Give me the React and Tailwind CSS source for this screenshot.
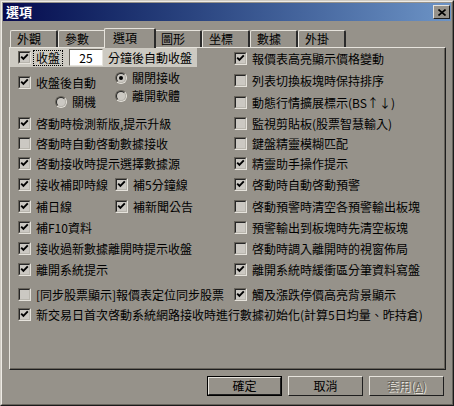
import React from 'react';

const FONT = { fontFamily: '"Noto Sans CJK TC", "Noto Sans CJK SC", sans-serif' };

const Check = ({ checked }) => (
  <span className="block w-[13px] h-[13px] shrink-0 border border-t-[#67635b] border-l-[#67635b] border-b-[#e6e3dc] border-r-[#e6e3dc]">
    <span className="flex items-center justify-center w-full h-full border border-t-[#262626] border-l-[#262626] border-b-[#b8b5ad] border-r-[#b8b5ad] bg-[#cbc8c2]">
      {checked && (
        <svg width="9" height="9" viewBox="0 0 9 9">
          <path d="M1.2 3.6 L3.4 5.9 L7.8 1.4" fill="none" stroke="#000" strokeWidth="1.9" />
        </svg>
      )}
    </span>
  </span>
);

const Radio = ({ checked }) => (
  <span className="block w-[12px] h-[12px] shrink-0 rounded-full border border-t-[#67635b] border-l-[#67635b] border-b-[#e6e3dc] border-r-[#e6e3dc]">
    <span className="flex items-center justify-center w-full h-full rounded-full border border-t-[#262626] border-l-[#262626] border-b-[#b8b5ad] border-r-[#b8b5ad] bg-[#cbc8c2]">
      {checked && <span className="block w-[4px] h-[4px] rounded-full bg-black" />}
    </span>
  </span>
);

const Item = ({ checked, label }) => (
  <span className="flex items-center h-[13px] gap-[5px] whitespace-nowrap">
    <Check checked={checked} />
    <span className="leading-[13px]">{label}</span>
  </span>
);

const Row = ({ h, children, className = '' }) => (
  <div className={`flex items-start pt-[4px] ${h} ${className}`}>{children}</div>
);

const rightRows = [
  { c: true, t: '報價表高亮顯示價格變動', h: 'h-[22px]' },
  { c: false, t: '列表切換板塊時保持排序', h: 'h-[22px]' },
  { c: false, t: '動態行情擴展標示(BS↑↓)', h: 'h-[21px]' },
  { c: false, t: '監視剪貼板(股票智慧輸入)', h: 'h-[20px]' },
  { c: false, t: '鍵盤精靈模糊匹配', h: 'h-[20px]' },
  { c: true, t: '精靈助手操作提示', h: 'h-[21px]' },
  { c: true, t: '啓動時自動啓動預警', h: 'h-[22px]' },
  { c: false, t: '啓動預警時清空各預警輸出板塊', h: 'h-[21px]' },
  { c: false, t: '預警輸出到板塊時先清空板塊', h: 'h-[21px]' },
  { c: false, t: '啓動時調入離開時的視窗佈局', h: 'h-[21px]' },
  { c: true, t: '離開系統時緩衝區分筆資料寫盤', h: 'h-[25px]' },
  { c: true, t: '觸及漲跌停價高亮背景顯示', h: 'h-[20px]' },
];

const tabs = ['外觀', '參數', '選項', '圖形', '坐標', '數據', '外掛'];

const Button = ({ children, isDefault, disabled }) => (
  <div className={`w-[75px] h-[20px] ${isDefault ? 'border border-black' : ''}`}>
    <div className="w-full h-full flex items-center justify-center border border-t-[#e6e3dc] border-l-[#e6e3dc] border-b-[#1e1e1e] border-r-[#1e1e1e]">
      <span className={disabled ? 'text-[#67635b] [text-shadow:1px_1px_0_#e6e3dc]' : 'text-black'}>{children}</span>
    </div>
  </div>
);

export default function App() {
  return (
    <div className="w-[454px] h-[406px] bg-[#96928a] text-[12px] text-black border border-t-[#cfcbc3] border-l-[#cfcbc3] border-b-[#1a1a1a] border-r-[#1a1a1a]" style={FONT}>
      <div className="w-full h-full p-[1px] border border-t-[#eeebe5] border-l-[#eeebe5] border-b-[#67635b] border-r-[#67635b]">
        {/* title bar */}
        <div className="h-[18px] flex items-center justify-between pl-[3px] pr-[1px] bg-gradient-to-r from-[#08094e] to-[#6d94c6]">
          <span className="text-white font-bold text-[13px] leading-[14px]">選項</span>
          <div className="w-[17px] h-[14px] bg-[#96928a] flex items-center justify-center border border-t-[#e6e3dc] border-l-[#e6e3dc] border-b-[#1e1e1e] border-r-[#1e1e1e]">
            <svg width="8" height="7" viewBox="0 0 8 7">
              <path d="M0.5 0.5 L7.5 6.5 M7.5 0.5 L0.5 6.5" stroke="#000" strokeWidth="1.6" />
            </svg>
          </div>
        </div>

        <div className="pl-[6px]">
          {/* tabs */}
          <div className="flex items-end h-[19px] mt-[7px] pl-[1px]">
            {tabs.map((t) =>
              t === '選項' ? (
                <div key={t} className="relative z-10 -mx-[2px] -mb-[1px] w-[52px] h-[20px] pl-[8px] pt-[2px] bg-[#96928a] rounded-t-[2px] border-t border-l border-t-[#e6e3dc] border-l-[#e6e3dc] border-r-2 border-r-[#2a2a2a] leading-[14px]">
                  {t}
                </div>
              ) : (
                <div key={t} className="w-[48px] h-[17px] pl-[6px] flex items-center rounded-t-[2px] border-t border-l border-t-[#e6e3dc] border-l-[#e6e3dc] border-r-2 border-r-[#2a2a2a]">
                  {t}
                </div>
              )
            )}
          </div>

          {/* panel */}
          <div className="w-[437px] h-[323px] border border-t-[#e6e3dc] border-l-[#e6e3dc] border-b-[#1e1e1e] border-r-[#1e1e1e]">
            <div className="w-full h-full border-b border-r border-b-[#67635b] border-r-[#67635b]">
              <div className="flex">
                {/* left column */}
                <div className="w-[224px]">
                  <div className="h-[65px]">
                    <div className="w-[187px] h-[19px] bg-[#cdcac2] flex items-center pl-[8px]">
                      <Check checked />
                      <span className="ml-[2px] px-[2px] h-[16px] flex items-center border border-dotted border-black">收盤</span>
                      <span className="ml-[6px] w-[34px] h-[17px] bg-white flex items-center justify-center border border-t-[#67635b] border-l-[#67635b] border-b-[#e6e3dc] border-r-[#e6e3dc]">
                        25
                      </span>
                      <span className="ml-[5px] whitespace-nowrap">分鐘後自動收盤</span>
                    </div>
                    <div className="flex">
                      <div className="w-[105px] pl-[8px] pt-[9px]">
                        <Item checked label="收盤後自動" />
                        <div className="flex items-center gap-[5px] h-[12px] mt-[7px] pl-[37px]">
                          <Radio />
                          <span>關機</span>
                        </div>
                      </div>
                      <div className="pt-[5px]">
                        <div className="flex items-center gap-[5px] h-[12px]">
                          <Radio checked />
                          <span>關閉接收</span>
                        </div>
                        <div className="flex items-center gap-[5px] h-[12px] mt-[6px]">
                          <Radio />
                          <span>離開軟體</span>
                        </div>
                      </div>
                    </div>
                  </div>
                  <div className="pl-[8px]">
                    <Row h="h-[20px]"><Item checked label="啓動時檢測新版,提示升級" /></Row>
                    <Row h="h-[20px]"><Item label="啓動時自動啓動數據接收" /></Row>
                    <Row h="h-[21px]"><Item checked label="啓動接收時提示選擇數據源" /></Row>
                    <Row h="h-[22px]">
                      <div className="w-[97px]"><Item checked label="接收補即時線" /></div>
                      <Item checked label="補5分鐘線" />
                    </Row>
                    <Row h="h-[21px]">
                      <div className="w-[97px]"><Item checked label="補日線" /></div>
                      <Item checked label="補新聞公告" />
                    </Row>
                    <Row h="h-[21px]"><Item checked label="補F10資料" /></Row>
                    <Row h="h-[21px]"><Item checked label="接收過新數據離開時提示收盤" /></Row>
                    <Row h="h-[25px]"><Item checked label="離開系統提示" /></Row>
                    <Row h="h-[20px]"><Item label="[同步股票顯示]報價表定位同步股票" /></Row>
                  </div>
                </div>
                {/* right column */}
                <div>
                  {rightRows.map((r) => (
                    <Row key={r.t} h={r.h}>
                      <Item checked={r.c} label={r.t} />
                    </Row>
                  ))}
                </div>
              </div>
              <Row h="h-[20px]" className="pl-[8px]">
                <Item checked label="新交易日首次啓動系統網路接收時進行數據初始化(計算5日均量、昨持倉)" />
              </Row>
            </div>
          </div>

          {/* buttons */}
          <div className="w-[437px] flex justify-end gap-[6px] pr-[2px] mt-[6px]">
            <Button isDefault>確定</Button>
            <Button>取消</Button>
            <Button disabled>
              套用(<span className="underline">A</span>)
            </Button>
          </div>
        </div>
      </div>
    </div>
  );
}
